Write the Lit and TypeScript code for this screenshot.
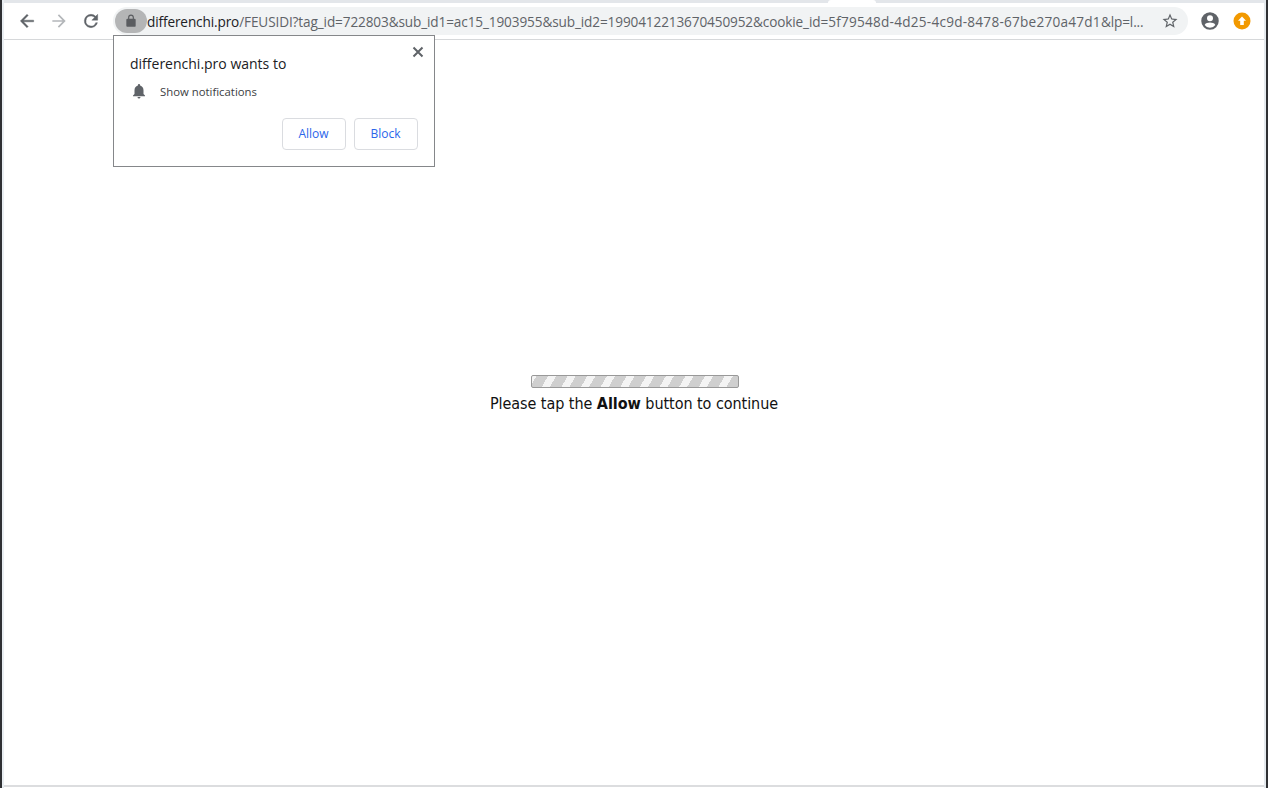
import { LitElement, html, css } from "lit";
import { customElement } from "lit/decorators.js";

const UI = css`"Open Sans", "Noto Sans", sans-serif`;

@customElement("app-root")
export class AppRoot extends LitElement {
  static styles = css`
    :host { display: block; width: 1268px; height: 788px; overflow: hidden; background: #fff; }
    .window { position: relative; height: 788px; border-left: 2px solid #2f3033; border-right: 2px solid #2f3033; box-sizing: border-box; background: #fff; }
    .frame { display: flex; flex-direction: column; height: 788px; box-sizing: border-box; border-left: 2px solid #e9eef2; border-right: 2px solid #e4e9ed; padding-bottom: 1px; }
    .strip { height: 3px; background: #e3e6ea; display: flex; padding-left: 824px; flex: none; }
    .tab { width: 48px; height: 3px; background: #fff; border-radius: 4px 4px 0 0; }
    .toolbar { height: 37px; flex: none; box-sizing: border-box; border-bottom: 1px solid #d6d8da; display: flex; align-items: center; background: #fff; }
    .nav { width: 109px; flex: none; display: flex; align-items: center; padding-left: 13px; gap: 12px; box-sizing: border-box; }
    .nav svg { display: block; flex: none; }
    .omni { width: 1075px; height: 28px; flex: none; background: #f1f3f4; border-radius: 14px; display: flex; align-items: center; box-sizing: border-box; padding: 0 9px 0 2px; }
    .lock { width: 32px; height: 24px; border-radius: 12px; background: #b4b5b6; display: flex; align-items: center; justify-content: center; flex: none; }
    .url { flex: 1; min-width: 0; white-space: nowrap; overflow: hidden; font: 13.6px ${UI}; color: #5f6368; letter-spacing: -0.12px; }
    .host { color: #202124; }
    .uuid { letter-spacing: 0.24px; }
    .star { flex: none; display: block; margin-left: 8px; }
    .actions { display: flex; align-items: center; gap: 13px; margin-left: 12px; }
    .actions svg { display: block; }
    .page { flex: 1; display: flex; flex-direction: column; align-items: center; padding: 335px 0 0 2px; border-bottom: 2px solid #dcdddf; min-height: 0; }
    .bar { width: 208px; height: 13px; box-sizing: border-box; border: 1px solid #999; border-radius: 2px; background: repeating-linear-gradient(-60deg, #cfcfcf 0 10px, #f4f4f4 10px 17px); }
    .msg { margin: 6px 2px 0 0; font: 16px/20px "DejaVu Sans", Verdana, sans-serif; font-stretch: condensed; color: #111; letter-spacing: -0.05px; }
    .msg b { font-weight: 700; }
    .popup { position: absolute; left: 111px; top: 35px; width: 322px; height: 132px; box-sizing: border-box; background: #fff; border: 1px solid #85878a; font-family: ${UI}; padding: 18px 16px 16px; display: flex; flex-direction: column; }
    .close { position: absolute; right: 9px; top: 9px; display: block; }
    .title { font-size: 14px; line-height: 20px; color: #202124; }
    .perm { display: flex; align-items: center; margin-top: 7px; height: 20px; font-size: 11.35px; color: #3c4043; }
    .perm svg { display: block; margin-right: 12px; }
    .buttons { display: flex; justify-content: flex-end; gap: 8px; margin-top: 17px; }
    .btn { width: 64px; height: 32px; box-sizing: border-box; border: 1px solid #dadce0; border-radius: 4px; background: #fff; color: #2b66ea; font: 500 12px ${UI}; padding: 0 1px 2px 0; }
  `;

  render() {
    return html`
      <div class="window">
        <div class="frame">
          <div class="strip"><div class="tab"></div></div>
          <div class="toolbar">
            <div class="nav">
              <svg width="20" height="20" viewBox="0 0 24 24"><path fill="#5f6368" stroke="#5f6368" stroke-width=".5" d="M20 11H7.83l5.59-5.59L12 4l-8 8 8 8 1.41-1.41L7.83 13H20z"/></svg>
              <svg width="20" height="20" viewBox="0 0 24 24"><path fill="#b4b7ba" d="M12 4l-1.41 1.41L16.17 11H4v2h12.17l-5.58 5.59L12 20l8-8z"/></svg>
              <svg width="20" height="20" viewBox="0 0 24 24"><path fill="#5f6368" stroke="#5f6368" stroke-width=".5" d="M17.65 6.35A7.96 7.96 0 0 0 12 4a8 8 0 1 0 7.73 10h-2.08A6 6 0 1 1 12 6c1.66 0 3.14.69 4.22 1.78L13 11h7V4z"/></svg>
            </div>
            <div class="omni">
              <div class="lock"><svg width="14" height="14" viewBox="0 0 24 24"><path fill="#5a5c60" d="M18 8h-1V6A5 5 0 0 0 7 6v2H6a2 2 0 0 0-2 2v10c0 1.1.9 2 2 2h12a2 2 0 0 0 2-2V10a2 2 0 0 0-2-2zM9 6a3 3 0 0 1 6 0v2H9z"/></svg></div>
              <div class="url"><span class="host">differenchi.pro</span>/FEUSIDI?tag_id=722803&sub_id1=ac15_1903955&sub_id2=1990412213670450952&cookie_id=<span class="uuid">5f79548d-4d25-4c9d-8478-67be270a47d1</span>&lp=l...</div>
              <svg class="star" width="18" height="18" viewBox="0 0 24 24"><path fill="#5f6368" d="M22 9.24l-7.19-.62L12 2 9.19 8.63 2 9.24l5.46 4.73L5.82 21 12 17.27 18.18 21l-1.63-7.03L22 9.24zM12 15.4l-3.76 2.27 1-4.28-3.32-2.88 4.38-.38L12 6.1l1.71 4.04 4.38.38-3.32 2.88 1 4.28L12 15.4z"/></svg>
            </div>
            <div class="actions">
              <svg width="20" height="20" viewBox="0 0 24 24"><path fill="#5f6368" d="M12 1.5a10.5 10.5 0 1 0 0 21 10.5 10.5 0 0 0 0-21zm0 3.6a3.6 3.6 0 1 1 0 7.2 3.6 3.6 0 0 1 0-7.2zm0 15a8 8 0 0 1-6.4-3.3c.6-1.9 4.3-2.9 6.4-2.9s5.8 1 6.4 2.9A8 8 0 0 1 12 20.1z"/></svg>
              <svg width="18" height="18" viewBox="0 0 18 18"><circle cx="9" cy="9" r="8.5" fill="#f29900"/><path fill="#fff" d="M9 4.5l4 4.3h-2.2V13H7.2V8.8H5z"/></svg>
            </div>
          </div>
          <div class="page">
            <div class="bar"></div>
            <div class="msg">Please tap the <b>Allow</b> button to continue</div>
          </div>
        </div>
        <div class="popup">
          <svg class="close" width="14" height="14" viewBox="0 0 14 14"><path stroke="#5f6368" stroke-width="2" d="M2.5 2.5l9 9M11.5 2.5l-9 9"/></svg>
          <div class="title">differenchi.pro wants to</div>
          <div class="perm">
            <svg width="18" height="18" viewBox="0 0 24 24"><path fill="#5f6368" d="M12 22c1.1 0 2-.9 2-2h-4a2 2 0 0 0 2 2zm6-6v-5c0-3.07-1.64-5.64-4.5-6.32V4a1.5 1.5 0 0 0-3 0v.68C7.63 5.36 6 7.92 6 11v5l-2 2v1h16v-1z"/></svg>
            <span>Show notifications</span>
          </div>
          <div class="buttons">
            <button class="btn">Allow</button>
            <button class="btn">Block</button>
          </div>
        </div>
      </div>
    `;
  }
}
